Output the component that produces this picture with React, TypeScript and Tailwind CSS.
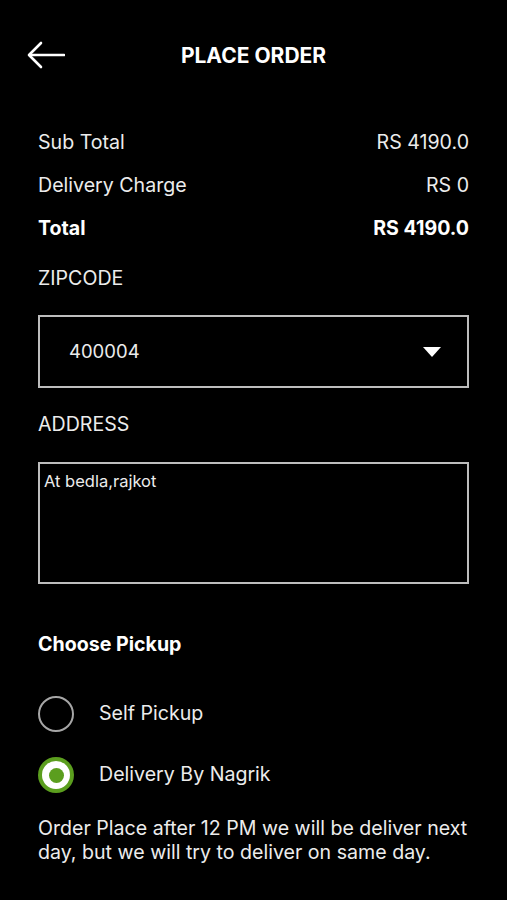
import { useState } from 'react';

const font = { fontFamily: 'Inter, "Noto Sans", sans-serif' };

function Radio({ checked, label, onClick }: { checked: boolean; label: string; onClick: () => void }) {
  return (
    <button type="button" onClick={onClick} className="flex items-center gap-[25px] h-[36px]">
      {checked ? (
        <span className="w-[36px] h-[36px] rounded-full bg-[#5b9e1e] flex items-center justify-center">
          <span className="w-[28px] h-[28px] rounded-full bg-white flex items-center justify-center">
            <span className="w-[15px] h-[15px] rounded-full bg-[#5b9e1e]" />
          </span>
        </span>
      ) : (
        <span className="w-[36px] h-[36px] rounded-full border-2 border-[#a6a6a6]" />
      )}
      <span className="text-[19.6px] text-[#ececec]">{label}</span>
    </button>
  );
}

export default function App() {
  const [pickup, setPickup] = useState<'self' | 'delivery'>('delivery');

  return (
    <div className="w-[507px] h-[900px] bg-black text-white overflow-hidden" style={font}>
      {/* header */}
      <div className="relative h-[112px] flex items-center justify-center">
        <button className="absolute left-[27px] top-[41px]">
          <svg width="38" height="28" viewBox="0 0 38 28" fill="none" stroke="white" strokeWidth="2.6" strokeLinecap="round" strokeLinejoin="round">
            <path d="M37 14H3" />
            <path d="M14 2L2 14l12 12" />
          </svg>
        </button>
        <h1 className="text-[21px] font-bold -mt-[1px]">PLACE ORDER</h1>
      </div>

      <div className="mt-[18px] px-[38px] text-[19.6px] text-[#ececec]">
        <div className="flex flex-col gap-[17px]">
          <div className="flex justify-between h-[26px] items-center">
            <span>Sub Total</span>
            <span>RS 4190.0</span>
          </div>
          <div className="flex justify-between h-[26px] items-center">
            <span>Delivery Charge</span>
            <span>RS 0</span>
          </div>
          <div className="flex justify-between h-[26px] items-center font-bold text-white">
            <span>Total</span>
            <span>RS 4190.0</span>
          </div>
        </div>

        <div className="mt-[24px] h-[26px] flex items-center">ZIPCODE</div>
        <div className="mt-[23px] h-[73px] border-2 border-[#bdbdbd] flex items-center justify-between pl-[29px] pr-[26px]">
          <span className="text-[18.5px]">400004</span>
          <svg width="18" height="10" viewBox="0 0 18 10">
            <path d="M0 0h18L9 10z" fill="white" />
          </svg>
        </div>

        <div className="mt-[24px] h-[26px] flex items-center">ADDRESS</div>
        <div className="mt-[24px] h-[122px] border-2 border-[#bdbdbd] px-[4px] pt-[2px]">
          <span className="text-[16.5px]">At bedla,rajkot</span>
        </div>

        <div className="mt-[48px] h-[26px] flex items-center font-bold text-white">Choose Pickup</div>

        <div className="mt-[38px] flex flex-col gap-[25px]">
          <Radio checked={pickup === 'self'} label="Self Pickup" onClick={() => setPickup('self')} />
          <Radio checked={pickup === 'delivery'} label="Delivery By Nagrik" onClick={() => setPickup('delivery')} />
        </div>

        <p className="mt-[23px] leading-[24px]">
          Order Place after 12 PM we will be deliver next day, but we will try to deliver on same day.
        </p>
      </div>
    </div>
  );
}
